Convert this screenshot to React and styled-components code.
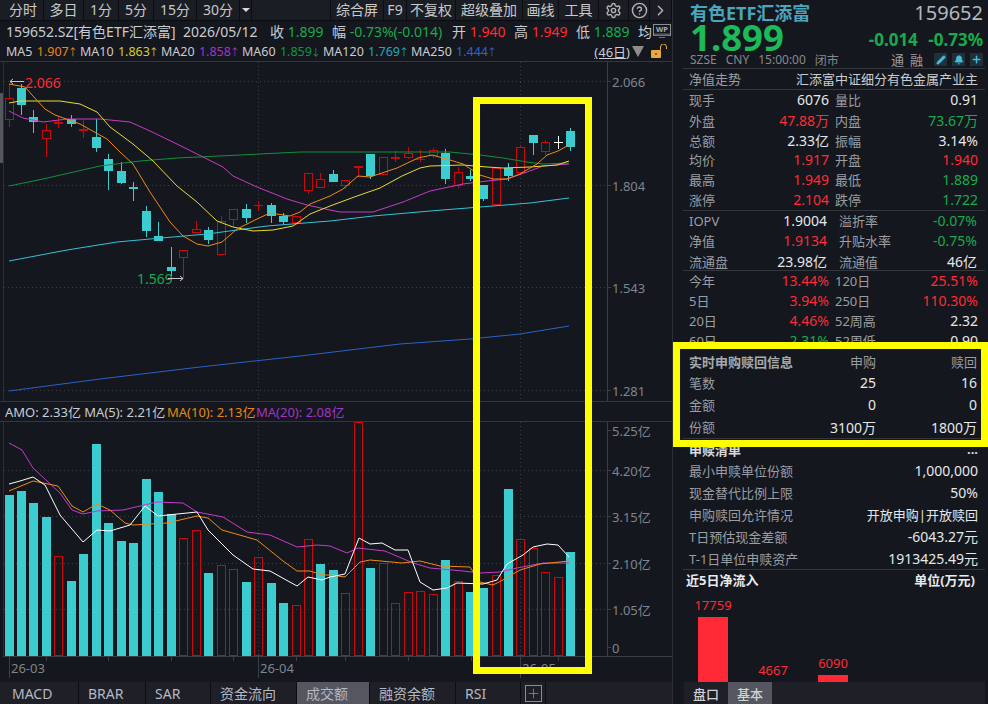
import React from "react";
import styled, { createGlobalStyle } from "styled-components";
import { Settings, CircleHelp, ChevronRight, Pencil, Bell, Plus } from "lucide-react";

const FONT = '"Noto Sans", "Noto Sans CJK SC", sans-serif';
const RED = "#ff2a35";
const GREEN = "#17ab4c";
const CYAN = "#3acccf";
const DARKRED = "#c80a0a";
const LABEL = "#9a9ea3";
const VALUE = "#e4e7ea";

// --- chart data, in page pixels ---
// [x, wickTop, wickBottom, bodyTop, bodyBottom, kind]
const CANDLES = [
  [9.5, 85, 128, 99, 120, "r"], [21.5, 85, 116, 89, 106, "c"], [33.5, 111, 134, 118, 123, "c"],
  [46.5, 125, 158, 131, 139, "r"], [58.5, 118, 129, 123, 125, "d"], [71.5, 116, 128, 120, 125, "c"],
  [83.5, 121, 139, 130, 132, "d"], [96.5, 120, 153, 138, 149, "c"], [108.5, 155, 191, 160, 172, "c"],
  [121.5, 163, 185, 172, 184, "c"], [133.5, 183, 202, 188, 190, "c"], [146.5, 207, 238, 212, 232, "c"],
  [158.5, 223, 242, 237, 242, "c"], [171.5, 248, 277, 268, 272, "c"], [183.5, 251, 280, 251, 258, "r"],
  [196.5, 222, 235, 230, 233, "r"], [208.5, 228, 245, 231, 241, "c"], [221.5, 217, 255, 222, 255, "r"],
  [233.5, 210, 228, 210, 220, "r"], [246.5, 205, 224, 210, 219, "c"], [258.5, 202, 212, 206, 207, "d"],
  [271.5, 204, 224, 206, 217, "c"], [283.5, 214, 226, 217, 223, "c"], [296.5, 217, 226, 217, 223, "r"],
  [308.5, 174, 195, 174, 191, "r"], [320.5, 174, 189, 180, 188, "r"], [333.5, 171, 183, 175, 183, "c"],
  [345.5, 181, 190, 181, 186, "r"], [358.5, 167, 178, 167, 169, "d"], [370.5, 155, 180, 155, 177, "c"],
  [383.5, 158, 175, 158, 175, "r"], [395.5, 152, 163, 158, 160, "d"], [408.5, 148, 160, 154, 158, "r"],
  [420.5, 151, 163, 160, 161, "d"], [433.5, 149, 159, 151, 156, "r"], [445.5, 150, 185, 154, 180, "c"],
  [458.5, 168, 189, 173, 186, "r"], [470.5, 171, 182, 177, 180, "c"], [483.5, 186, 202, 186, 200, "c"],
  [496.5, 169, 206, 169, 205, "r"], [508.5, 164, 182, 169, 177, "c"], [520.5, 146, 173, 148, 173, "r"],
  [533.5, 136, 156, 136, 144, "c"], [545.5, 141, 156, 143, 152, "r"], [558.5, 137, 150, 143, 144, "w"],
  [570.5, 129, 152, 132, 148, "c"],
];

// bar tops, same order as the candles
const VOLUMES = [
  [497, "c"], [493, "c"], [505, "c"], [519, "c"], [558, "r"], [583, "c"], [556, "c"], [446, "c"],
  [525, "c"], [543, "c"], [545, "c"], [481, "c"], [494, "c"], [516, "c"], [540, "r"], [532, "r"],
  [575, "c"], [567, "r"], [571, "r"], [584, "c"], [559, "r"], [585, "c"], [605, "c"], [607, "r"],
  [541, "r"], [566, "c"], [572, "c"], [595, "r"], [424, "r"], [570, "c"], [565, "r"], [605, "r"],
  [594, "r"], [593, "r"], [596, "r"], [562, "c"], [583, "r"], [594, "c"], [590, "c"], [577, "r"],
  [491, "c"], [541, "r"], [550, "r"], [574, "r"], [579, "r"], [554, "c"],
];

const PRICE_LINES = [
  { color: "#2a62c8", points: "9,392 100,380 200,368 300,357 400,345 470,340 520,335 569,327" },
  { color: "#35c2d8", points: "9,262 67,251 117,243 150,240 207,235 267,227 330,222 373,217 430,212 480,208 530,204 569,199" },
  { color: "#0f9138", points: "9,187 43,180 100,167 140,162 177,159 240,156 300,153 330,153 450,153 480,156 503,159 527,163 543,165 569,164" },
  { color: "#c73ac8", points: "9,112 23,119 43,123 67,120 100,120 130,123 150,132 177,145 203,158 223,168 233,177 257,188 287,200 307,206 330,211 340,213 373,213 403,203 430,192 463,185 487,182 507,180 527,173 543,167 569,165" },
  { color: "#e8dc30", points: "9,104 20,102 60,102 80,105 97,113 110,128 133,145 153,162 177,187 197,203 217,222 233,228 253,232 273,231 293,227 310,215 330,207 357,197 380,189 402,177 420,169 430,167 463,166 487,168 503,169 530,168 557,166 569,162" },
  { color: "#f08a14", points: "9,85 25,88 33,97 45,110 55,116 80,125 107,140 120,153 133,165 150,193 170,223 183,237 197,245 208,247 222,243 237,230 257,220 270,214 290,217 300,213 310,205 330,197 343,190 358,177 370,178 397,169 418,159 432,156 450,161 463,165 480,176 493,180 507,180 520,175 537,165 547,156 558,152 569,146" },
];

const VOLUME_LINES = [
  { color: "#c73ac8", points: "9,445 22,452 33,470 60,495 72,512 83,516 97,513 123,512 157,504 183,505 197,514 223,519 247,534 270,537 297,549 317,547 330,548 347,555 358,550 385,553 413,565 430,570 463,573 480,575 500,574 517,570 543,565 569,565" },
  { color: "#f08a14", points: "9,493 33,483 58,488 72,508 83,514 97,506 110,512 125,525 133,527 167,525 197,518 208,520 222,532 257,542 283,563 297,573 310,573 322,577 330,577 345,579 360,564 370,562 402,565 420,563 440,568 470,569 480,584 493,587 503,582 520,572 540,566 569,563" },
  { color: "#ffffff", points: "9,486 20,483 33,479 45,487 60,517 83,544 97,532 110,533 130,527 145,508 158,518 197,514 208,532 233,557 253,571 270,573 297,588 308,579 322,582 330,579 345,576 359,540 370,546 382,545 395,552 408,552 420,584 433,592 447,590 457,585 483,586 497,582 507,566 523,557 533,549 547,546 558,547 569,559" },
];

const PRICE_SCALE = [[82, "2.066"], [186, "1.804"], [288, "1.543"], [391, "1.281"]];
const VOLUME_SCALE = [[432, "5.25亿", false], [472, "4.20亿", true], [518, "3.15亿", true], [565, "2.10亿", true], [611, "1.05亿", true], [649, "0", false]];
const TIME_TICKS = [46, 108, 171, 233, 296, 345, 408, 471, 558];
const TIME_MARKS = [[9, "26-03"], [258, "26-04"], [520, "26-05"]];

const LEFT_TABS = [["分时", 41], ["多日", 40], ["1分", 35], ["5分", 35], ["15分", 43], ["30分", 43]];
const RIGHT_TABS = [["综合屏", 53], ["F9", 23], ["不复权", 49], ["超级叠加", 67], ["画线", 36], ["工具", 40]];
const INDICATORS = [["MACD", 76], ["BRAR", 67], ["SAR", 65], ["资金流向", 86], ["成交额", 73], ["融资余额", 86], ["RSI", 65]];

const MA_ITEMS = [
  ["MA5", "1.907", "↑", "#e8890f", 74], ["MA10", "1.863", "↑", "#d6cf28", 81], ["MA20", "1.858", "↑", "#a533c8", 81],
  ["MA60", "1.859", "↓", "#109640", 81], ["MA120", "1.769", "↑", "#22a6bf", 88], ["MA250", "1.444", "↑", "#2f63cc", 88],
];

const QUOTES = [
  ["现手", "6076", "", "量比", "0.91", ""], ["外盘", "47.88万", "up", "内盘", "73.67万", "down"],
  ["总额", "2.33亿", "", "振幅", "3.14%", ""], ["均价", "1.917", "up", "开盘", "1.940", "up"],
  ["最高", "1.949", "up", "最低", "1.889", "down"], ["涨停", "2.104", "up", "跌停", "1.722", "down"],
];
const NAV_ROWS = [
  ["IOPV", "1.9004", "", "溢折率", "-0.07%", "down"], ["净值", "1.9134", "up", "升贴水率", "-0.75%", "down"],
  ["流通盘", "23.98亿", "", "流通值", "46亿", ""],
];
const PERF_ROWS = [
  ["今年", "13.44%", "up", "120日", "25.51%", "up"], ["5日", "3.94%", "up", "250日", "110.30%", "up"],
  ["20日", "4.46%", "up", "52周高", "2.32", ""], ["60日", "2.31%", "down", "52周低", "0.90", ""],
];
const CREATION_ROWS = [["笔数", "25", "16"], ["金额", "0", "0"], ["份额", "3100万", "1800万"]];
const BASKET_ROWS = [
  ["最小申赎单位份额", "1,000,000"], ["现金替代比例上限", "50%"], ["申购赎回允许情况", "开放申购|开放赎回", true],
  ["T日预估现金差额", "-6043.27元"], ["T-1日单位申赎资产", "1913425.49元"],
];
const FLOWS = [17759, 4667, 6090];

// --- styles ---
const GlobalStyle = createGlobalStyle`
  html, body { margin: 0; padding: 0; background: #14171e; overflow: hidden; }
  * { box-sizing: border-box; }
`;

const Page = styled.div`
  position: relative;
  display: flex;
  width: 988px;
  height: 704px;
  overflow: hidden;
  background: #14171e;
  color: ${VALUE};
  font-family: ${FONT};
`;

const ChartColumn = styled.div`
  position: relative;
  width: 673px;
  flex: none;
  display: flex;
  flex-direction: column;
  border-right: 1px solid #2c2f35;
`;

const Toolbar = styled.div`
  height: 21px;
  padding-left: 3px;
  display: flex;
  background: #1b1d24;
  border-bottom: 1px solid #0c0d10;
`;

const ToolTab = styled.div`
  width: ${(p) => p.$w}px;
  flex: none;
  display: flex;
  align-items: center;
  justify-content: center;
  border-right: 1px solid #0c0d10;
  color: ${(p) => (p.$muted ? "#b4b4b4" : "#c9c9c9")};
  font-size: 14px;
  line-height: 20px;
`;

const ToolGap = styled.div`
  flex: 1;
  border-right: 1px solid #0c0d10;
`;

const InfoRow = styled.div`
  height: 20px;
  padding-left: 6px;
  display: flex;
  align-items: center;
  font-size: 14px;
  white-space: nowrap;
`;

const MaRow = styled(InfoRow)`
  height: 21px;
  font-size: 12.5px;
  border-bottom: 1px solid #33363c;
`;

const InfoItem = styled.span`
  width: ${(p) => p.$w}px;
  flex: none;
  color: #c9ccd0;
`;

const MaValue = styled.span`
  margin-left: 1px;
  color: ${(p) => p.$c};
`;

const MaArrow = styled.span`
  display: inline-block;
  width: 4px;
  margin-left: 1px;
  font-size: 10px;
  text-indent: -2px;
  color: ${(p) => p.$c};
`;

const Tone = styled.span`
  color: ${(p) => p.$c};
`;

const DaysLink = styled.span`
  margin-left: auto;
  font-size: 13px;
  color: #c9ccd0;
  text-decoration: underline;
`;

const MenuTriangle = styled.span`
  width: 0;
  height: 0;
  margin: 0 7px 0 2px;
  border-left: 6px solid transparent;
  border-right: 6px solid transparent;
  border-top: 11px solid #8d8d8d;
`;

const SmallTriangle = styled.span`
  width: 0;
  height: 0;
  border-left: 4px solid transparent;
  border-right: 4px solid transparent;
  border-top: 4px solid #d8d8d8;
`;

const LockIcon = styled.svg`
  width: 17px;
  height: 15px;
  margin-right: 4px;
  flex: none;
`;

const WpIcon = styled.svg`
  width: 18px;
  height: 15px;
  margin-left: auto;
  margin-right: 1px;
  flex: none;
`;

const ChartSvg = styled.svg`
  display: block;
  flex: none;
  font-family: ${FONT};
`;

const AmoRow = styled(InfoRow)`
  height: 21px;
  padding-left: 5px;
  font-size: 13px;
  border-top: 1px solid #33363c;
  border-bottom: 1px solid #33363c;
`;

const ScaleText = styled.text`
  fill: #7f858c;
  font-size: 13px;
  dominant-baseline: central;
`;

const MarkText = styled.text`
  fill: ${(p) => p.$c};
  font-size: 14px;
  dominant-baseline: central;
`;

const IndicatorBar = styled.div`
  height: 22px;
  margin-top: auto;
  padding-left: 3px;
  display: flex;
  background: #1e1f27;
`;

const IndicatorTab = styled.div`
  width: ${(p) => p.$w}px;
  flex: none;
  padding-left: 9px;
  display: flex;
  align-items: center;
  border-right: 1px solid #0c0d10;
  background: ${(p) => (p.$active ? "#565660" : "transparent")};
  color: #b4b9c2;
  font-size: 14px;
`;

const AddBox = styled.div`
  width: 25px;
  flex: none;
  display: flex;
  align-items: center;
  justify-content: center;
  border-right: 1px solid #0c0d10;
  color: #a8a8a8;
`;

const AddIcon = styled.span`
  width: 17px;
  height: 17px;
  display: flex;
  align-items: center;
  justify-content: center;
  border: 1px solid #8c8c8c;
`;

const Highlight = styled.div`
  position: absolute;
  left: ${(p) => p.$left}px;
  top: ${(p) => p.$top}px;
  width: ${(p) => p.$width}px;
  height: ${(p) => p.$height}px;
  border: 7px solid #ffff00;
  pointer-events: none;
`;

const Panel = styled.div`
  flex: 1;
  display: flex;
  flex-direction: column;
  min-width: 0;
`;

const Section = styled.div`
  margin: 0 3px 0 10px;
  padding: 0 7px 0 6px;
  flex: none;
  height: ${(p) => (p.$h ? `${p.$h}px` : "auto")};
  border-bottom: ${(p) => (p.$plain ? "none" : "1px solid #33363c")};
`;

const Head = styled.div`
  height: 69px;
  margin: 0 3px 0 10px;
  padding: 2px 2px 0 7px;
  flex: none;
  border-bottom: 1px solid #33363c;
  display: grid;
  grid-template-columns: 1fr auto;
  grid-template-rows: 22px 27px 17px;
`;

const FundName = styled.div`
  color: #4aa6bd;
  font-size: 18px;
  font-weight: 700;
  line-height: 22px;
`;

const FundCode = styled.div`
  color: #b4b8bc;
  font-size: 20px;
  line-height: 22px;
  text-align: right;
`;

const BigPrice = styled.div`
  color: #1cba58;
  font-size: 36.5px;
  font-weight: 700;
  line-height: 27px;
`;

const Change = styled.div`
  color: ${GREEN};
  font-size: 17px;
  font-weight: 700;
  line-height: 31px;
  word-spacing: 6px;
  text-align: right;
`;

const MetaRow = styled.div`
  grid-column: 1 / 3;
  display: flex;
  align-items: center;
  color: #858a90;
  font-size: 12px;
  white-space: nowrap;
`;

const MetaItem = styled.span`
  margin-right: 9px;
`;

const MetaTag = styled.span`
  color: #9a9ea3;
  font-size: 13px;
  margin-right: 6px;
`;

const MiniButton = styled.span`
  width: 13px;
  height: 13px;
  margin-left: 5px;
  display: flex;
  align-items: center;
  justify-content: center;
  background: #1f3038;
  color: #45bcdc;
`;

const MetaSpacer = styled.span`
  flex: 1;
`;

const TitleRow = styled.div`
  height: 20px;
  padding-bottom: 2px;
  display: flex;
  align-items: center;
  justify-content: space-between;
  color: ${LABEL};
  font-size: 13px;
  white-space: nowrap;
`;

const FundFull = styled.span`
  color: #c9ccd0;
`;

const StatRow = styled.div`
  height: 20px;
  display: grid;
  grid-template-columns: ${(p) => (p.$wide ? "138px 138px" : "140px 143px")};
  column-gap: ${(p) => (p.$wide ? "12px" : "6px")};
`;

const StatCell = styled.div`
  padding-bottom: 2px;
  display: flex;
  align-items: center;
  justify-content: space-between;
  white-space: nowrap;
`;

const Label = styled.span`
  color: ${LABEL};
  font-size: 13px;
`;

const Num = styled.span`
  color: ${(p) => (p.$tone === "up" ? RED : p.$tone === "down" ? GREEN : VALUE)};
  font-size: 14px;
`;

const CjkValue = styled.span`
  color: ${VALUE};
  font-size: 13px;
`;

const CreationGrid = styled.div`
  display: grid;
  grid-template-columns: 127px 60px 101px;
  grid-template-rows: 20px 23px 21px 23px;
  align-items: center;
  text-align: right;
`;

const CreationHead = styled.span`
  color: #a6a9ad;
  font-size: 13px;
  font-weight: 700;
  text-align: left;
  white-space: nowrap;
`;

const CreationLabel = styled(Label)`
  text-align: left;
`;

const BasketTitle = styled.div`
  height: 20px;
  display: flex;
  align-items: center;
  justify-content: space-between;
  font-size: 13px;
  font-weight: 700;
  color: #d8dadc;
`;

const BasketRow = styled.div`
  height: 22px;
  display: flex;
  align-items: center;
  justify-content: space-between;
  white-space: nowrap;
`;

const BoldRow = styled.div`
  height: 20px;
  margin-left: -3px;
  padding: 0 3px 2px 0;
  display: flex;
  align-items: center;
  justify-content: space-between;
  color: #e8eaec;
  font-size: 13px;
  font-weight: 700;
`;

const FlowClip = styled.div`
  height: 92px;
  overflow: hidden;
  flex: none;
`;

const FlowChart = styled.div`
  height: 115px;
  padding-left: 25px;
  display: flex;
  align-items: flex-end;
  gap: 30px;
`;

const FlowColumn = styled.div`
  width: 30px;
  display: flex;
  flex-direction: column;
  align-items: center;
`;

const FlowValue = styled.span`
  padding-bottom: 2px;
  color: ${RED};
  font-size: 13px;
  line-height: 20px;
`;

const FlowBar = styled.div`
  width: 30px;
  background: #ff2a35;
`;

const PanelTabs = styled.div`
  height: 22px;
  margin: 0 3px 0 11px;
  flex: none;
  display: flex;
  background: #1e1f27;
`;

const PanelTab = styled.div`
  width: 44px;
  display: flex;
  align-items: center;
  justify-content: center;
  background: ${(p) => (p.$active ? "#565660" : "transparent")};
  color: #d0d3d6;
  font-size: 13px;
  font-weight: 500;
`;

// --- chart parts ---
function Candle({ item }) {
  const [x, top, bottom, bodyTop, bodyBottom, kind] = item;
  const color = kind === "c" ? CYAN : kind === "w" ? "#ffffff" : DARKRED;
  const hollow = kind === "r";
  return (
    <g shapeRendering="crispEdges">
      <line x1={x} x2={x} y1={top} y2={bottom} stroke={color} />
      {hollow ? (
        <rect x={x - 4} y={bodyTop + 0.5} width={8} height={bodyBottom - bodyTop} fill="#14171e" stroke={color} />
      ) : (
        <rect x={x - 4.5} y={bodyTop} width={9} height={Math.max(bodyBottom - bodyTop, 1)} fill={color} />
      )}
    </g>
  );
}

function VolumeBar({ x, top, kind }) {
  if (kind === "c") {
    return <rect x={x - 4.5} y={top} width={9} height={658 - top} fill={CYAN} shapeRendering="crispEdges" />;
  }
  return <rect x={x - 4} y={top + 0.5} width={8} height={657 - top} fill="none" stroke={DARKRED} shapeRendering="crispEdges" />;
}

function Lines({ lines }) {
  return lines.map((line) => (
    <polyline key={line.color} points={line.points} fill="none" stroke={line.color} strokeWidth="1" />
  ));
}

function PriceChart() {
  return (
    <ChartSvg width="672" height="339" viewBox="0 63 672 339">
      <rect x="0" y="94" width="3" height="70" fill="#55565e" />
      <g stroke="#3b3e45" strokeDasharray="1 3" shapeRendering="crispEdges">
        {PRICE_SCALE.map(([y]) => <line key={y} x1="4" x2="606" y1={y + 0.5} y2={y + 0.5} />)}
        <line x1="258.5" x2="258.5" y1="63" y2="402" />
        <line x1="520.5" x2="520.5" y1="63" y2="402" />
      </g>
      <line x1="3.5" x2="3.5" y1="63" y2="402" stroke="#2c2f35" />
      <line x1="607.5" x2="607.5" y1="63" y2="402" stroke="#3b3e45" />
      {CANDLES.map((c) => <Candle key={c[0]} item={c} />)}
      <Lines lines={PRICE_LINES} />
      {PRICE_SCALE.map(([y, text]) => (
        <g key={text}>
          <line x1="607" x2="611" y1={y + 0.5} y2={y + 0.5} stroke="#3b3e45" />
          <ScaleText x="612" y={y + 1}>{text}</ScaleText>
        </g>
      ))}
      <path d="M24 82.5H10M13 80l-3 2.5 3 2.5" fill="none" stroke="#c8c8c8" />
      <MarkText x="25" y="83" $c={RED}>2.066</MarkText>
      <MarkText x="137" y="279" $c={GREEN}>1.569</MarkText>
      <path d="M168 279.5H183M180 277l3 2.5-3 2.5" fill="none" stroke="#c8c8c8" />
    </ChartSvg>
  );
}

function VolumeChart() {
  return (
    <ChartSvg width="672" height="258" viewBox="0 424 672 258">
      <g stroke="#3b3e45" strokeDasharray="1 3" shapeRendering="crispEdges">
        {VOLUME_SCALE.filter((s) => s[2]).map(([y]) => <line key={y} x1="4" x2="606" y1={y + 0.5} y2={y + 0.5} />)}
        <line x1="258.5" x2="258.5" y1="424" y2="658" />
        <line x1="520.5" x2="520.5" y1="424" y2="658" />
      </g>
      <line x1="3.5" x2="3.5" y1="424" y2="658" stroke="#2c2f35" />
      <line x1="607.5" x2="607.5" y1="424" y2="658" stroke="#3b3e45" />
      <line x1="3" x2="672" y1="658.5" y2="658.5" stroke="#3b3e45" />
      {VOLUMES.map(([top, kind], i) => <VolumeBar key={i} x={CANDLES[i][0]} top={top} kind={kind} />)}
      <Lines lines={VOLUME_LINES} />
      {VOLUME_SCALE.map(([y, text]) => (
        <g key={text}>
          <line x1="607" x2="611" y1={y + 0.5} y2={y + 0.5} stroke="#3b3e45" />
          <ScaleText x="612" y={y + 1}>{text}</ScaleText>
        </g>
      ))}
      {TIME_TICKS.map((x) => <line key={x} x1={x + 0.5} x2={x + 0.5} y1="659" y2="663" stroke="#3b3e45" />)}
      {TIME_MARKS.map(([x, text]) => (
        <g key={text}>
          <line x1={x + 0.5} x2={x + 0.5} y1="659" y2="680" stroke="#3b3e45" />
          <ScaleText x={x + 2} y="670">{text}</ScaleText>
        </g>
      ))}
    </ChartSvg>
  );
}

function StatRows({ rows, wide }) {
  return rows.map((r) => (
    <StatRow key={r[0]} $wide={wide}>
      <StatCell><Label>{r[0]}</Label><Num $tone={r[2]}>{r[1]}</Num></StatCell>
      <StatCell><Label>{r[3]}</Label><Num $tone={r[5]}>{r[4]}</Num></StatCell>
    </StatRow>
  ));
}

function App() {
  return (
    <Page>
      <GlobalStyle />
      <ChartColumn>
        <Toolbar>
          {LEFT_TABS.map(([t, w]) => <ToolTab key={t} $w={w}>{t}</ToolTab>)}
          <ToolTab $w={12} $muted><SmallTriangle /></ToolTab>
          <ToolGap />
          {RIGHT_TABS.map(([t, w]) => <ToolTab key={t} $w={w}>{t}</ToolTab>)}
          <ToolTab $w={30} $muted><Settings size={17} /></ToolTab>
          <ToolTab $w={21} $muted><CircleHelp size={17} /></ToolTab>
          <ToolTab $w={22} $muted><ChevronRight size={17} /></ToolTab>
        </Toolbar>
        <InfoRow>
          <InfoItem $w={177}>159652.SZ[有色ETF汇添富]</InfoItem>
          <InfoItem $w={87}>2026/05/12</InfoItem>
          <InfoItem $w={62}>收 <Tone $c={GREEN}>1.899</Tone></InfoItem>
          <InfoItem $w={120}>幅 <Tone $c={GREEN}>-0.73%(-0.014)</Tone></InfoItem>
          <InfoItem $w={62}>开 <Tone $c={RED}>1.940</Tone></InfoItem>
          <InfoItem $w={62}>高 <Tone $c={RED}>1.949</Tone></InfoItem>
          <InfoItem $w={62}>低 <Tone $c={GREEN}>1.889</Tone></InfoItem>
          <InfoItem $w={14}>均</InfoItem>
          <WpIcon viewBox="0 0 18 15">
            <rect x="0.5" y="0.5" width="17" height="11" fill="#16181d" stroke="#8a8d92" />
            <text x="3" y="8" fontSize="7.5" fontWeight="700" fill="#a8abb0" fontFamily={FONT}>WP</text>
            <rect x="1" y="9.5" width="16" height="2" fill="#55585e" />
            <path d="M12 10.5h1M14 10.5h1" stroke="#e02a2a" />
            <path d="M6 13.5h6" stroke="#6e7176" />
          </WpIcon>
        </InfoRow>
        <MaRow>
          {MA_ITEMS.map(([name, value, arrow, color, w]) => (
            <InfoItem key={name} $w={w}>
              {name} <MaValue $c={color}>{value}</MaValue><MaArrow $c={color}>{arrow}</MaArrow>
            </InfoItem>
          ))}
          <DaysLink>(46日)</DaysLink>
          <MenuTriangle />
          <LockIcon viewBox="0 0 17 15">
            <rect x="0" y="6" width="10" height="8" rx="1" fill="#e8a83c" />
            <circle cx="5" cy="10" r="1" fill="#6b4a10" />
            <path d="M9.5 6V3a3 3 0 0 1 6 0V5" fill="none" stroke="#e8a83c" strokeWidth="1" />
          </LockIcon>
        </MaRow>
        <PriceChart />
        <AmoRow>
          <InfoItem $w={162}>AMO: 2.33亿  MA(5): 2.21亿</InfoItem>
          <InfoItem $w={89}><Tone $c="#e8890f">MA(10): 2.13亿</Tone></InfoItem>
          <InfoItem $w={90}><Tone $c="#a533c8">MA(20): 2.08亿</Tone></InfoItem>
        </AmoRow>
        <VolumeChart />
        <IndicatorBar>
          {INDICATORS.map(([t, w]) => <IndicatorTab key={t} $w={w} $active={t === "成交额"}>{t}</IndicatorTab>)}
          <AddBox><AddIcon><Plus size={15} strokeWidth={1} /></AddIcon></AddBox>
        </IndicatorBar>
        <Highlight $left={473} $top={97} $width={119} $height={577} />
      </ChartColumn>

      <Panel>
        <Head>
          <FundName>有色ETF汇添富</FundName>
          <FundCode>159652</FundCode>
          <BigPrice>1.899</BigPrice>
          <Change>-0.014 -0.73%</Change>
          <MetaRow>
            <MetaItem>SZSE</MetaItem>
            <MetaItem>CNY</MetaItem>
            <MetaItem>15:00:00</MetaItem>
            <MetaItem>闭市</MetaItem>
            <MetaSpacer />
            <MetaTag>通</MetaTag>
            <MetaTag>融</MetaTag>
            <MiniButton><Pencil size={10} fill="currentColor" /></MiniButton>
            <MiniButton><Bell size={10} fill="currentColor" /></MiniButton>
            <MiniButton><Plus size={11} strokeWidth={3} /></MiniButton>
          </MetaRow>
        </Head>
        <Section>
          <TitleRow>净值走势<FundFull>汇添富中证细分有色金属产业主</FundFull></TitleRow>
        </Section>
        <Section><StatRows rows={QUOTES} /></Section>
        <Section $h={60}><StatRows rows={NAV_ROWS} wide /></Section>
        <Section $plain><StatRows rows={PERF_ROWS} /></Section>
        <Section>
          <CreationGrid>
            <CreationHead>实时申购赎回信息</CreationHead>
            <Label>申购</Label>
            <Label>赎回</Label>
            {CREATION_ROWS.map((r) => (
              <React.Fragment key={r[0]}>
                <CreationLabel>{r[0]}</CreationLabel>
                <Num>{r[1]}</Num>
                <Num>{r[2]}</Num>
              </React.Fragment>
            ))}
          </CreationGrid>
        </Section>
        <Section>
          <BasketTitle>申赎清单<span>...</span></BasketTitle>
          {BASKET_ROWS.map(([k, v, cjk]) => (
            <BasketRow key={k}><Label>{k}</Label>{cjk ? <CjkValue>{v}</CjkValue> : <Num>{v}</Num>}</BasketRow>
          ))}
        </Section>
        <Section $plain>
          <BoldRow>近5日净流入<span>单位(万元)</span></BoldRow>
        </Section>
        <FlowClip>
          <FlowChart>
            {FLOWS.map((v) => (
              <FlowColumn key={v}>
                <FlowValue>{v}</FlowValue>
                <FlowBar style={{ height: v * 0.00497 }} />
              </FlowColumn>
            ))}
          </FlowChart>
        </FlowClip>
        <PanelTabs>
          <PanelTab>盘口</PanelTab>
          <PanelTab $active>基本</PanelTab>
        </PanelTabs>
        <Highlight $left={673} $top={342} $width={315} $height={105} />
      </Panel>
    </Page>
  );
}

export default App;
